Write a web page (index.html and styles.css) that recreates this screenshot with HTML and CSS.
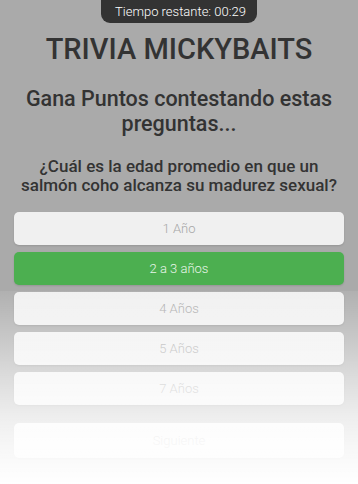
FILE: index.html
```html
<!DOCTYPE html>
<html lang="es">
<head>
<meta charset="utf-8">
<title>Trivia Mickybaits</title>
<link rel="stylesheet" href="styles.css">
</head>
<body>
<div class="page">
  <div class="timer">Tiempo restante: 00:29</div>
  <h1 class="title">TRIVIA MICKYBAITS</h1>
  <h2 class="subtitle">Gana Puntos contestando estas preguntas...</h2>
  <p class="question">¿Cuál es la edad promedio en que un salmón coho alcanza su madurez sexual?</p>
  <div class="options">
    <button class="option">1 Año</button>
    <button class="option option-selected">2 a 3 años</button>
    <button class="option">4 Años</button>
    <button class="option">5 Años</button>
    <button class="option">7 Años</button>
  </div>
  <button class="option next">Siguiente</button>
</div>
<div class="fade"></div>
</body>
</html>
```
FILE: styles.css
```css
* { box-sizing: border-box; }
html, body {
  margin: 0;
  padding: 0;
  height: 100%;
}
body {
  background: #aaaaaa;
  font-family: Roboto, "Liberation Sans", Arial, sans-serif;
  color: #333333;
  overflow: hidden;
}
.page {
  display: flex;
  flex-direction: column;
  align-items: center;
  padding: 0 14px;
}
.timer {
  background: #333333;
  color: #ffffff;
  font-size: 13px;
  font-weight: 300;
  line-height: 23px;
  height: 23px;
  padding: 0 14px;
  border-radius: 0 0 9px 9px;
  width: 156px;
  text-align: center;
  white-space: nowrap;
}
.title {
  margin: 12px 0 0;
  font-size: 29px;
  line-height: 29px;
  font-weight: 500;
  text-align: center;
}
.subtitle {
  margin: 22px 0 0;
  font-size: 21.5px;
  line-height: 25px;
  font-weight: 500;
  text-align: center;
}
.question {
  margin: 21px 0 0;
  font-size: 17px;
  line-height: 19px;
  font-weight: 500;
  text-align: center;
}
.options {
  align-self: stretch;
  display: flex;
  flex-direction: column;
  gap: 7px;
  margin-top: 17px;
}
.option {
  display: block;
  width: 100%;
  height: 33px;
  border: none;
  border-radius: 5px;
  background: #f0f0f0;
  color: #a6a6a6;
  font-family: Roboto, "Liberation Sans", Arial, sans-serif;
  font-size: 13px;
  font-weight: 300;
  box-shadow: 0 1px 2px rgba(0, 0, 0, 0.12);
  padding: 0;
}
.option-selected {
  background: #4caf50;
  color: #e8f5e9;
}
.next {
  margin-top: 18px;
  height: 35px;
}
.fade {
  position: fixed;
  left: 0;
  right: 0;
  top: 291px;
  bottom: 0;
  background: linear-gradient(to bottom, rgba(255,255,255,0.08) 0%, rgba(255,255,255,0.56) 42%, rgba(255,255,255,0.8) 65%, rgba(255,255,255,0.9) 80%, #ffffff 100%);
  pointer-events: none;
}
```
